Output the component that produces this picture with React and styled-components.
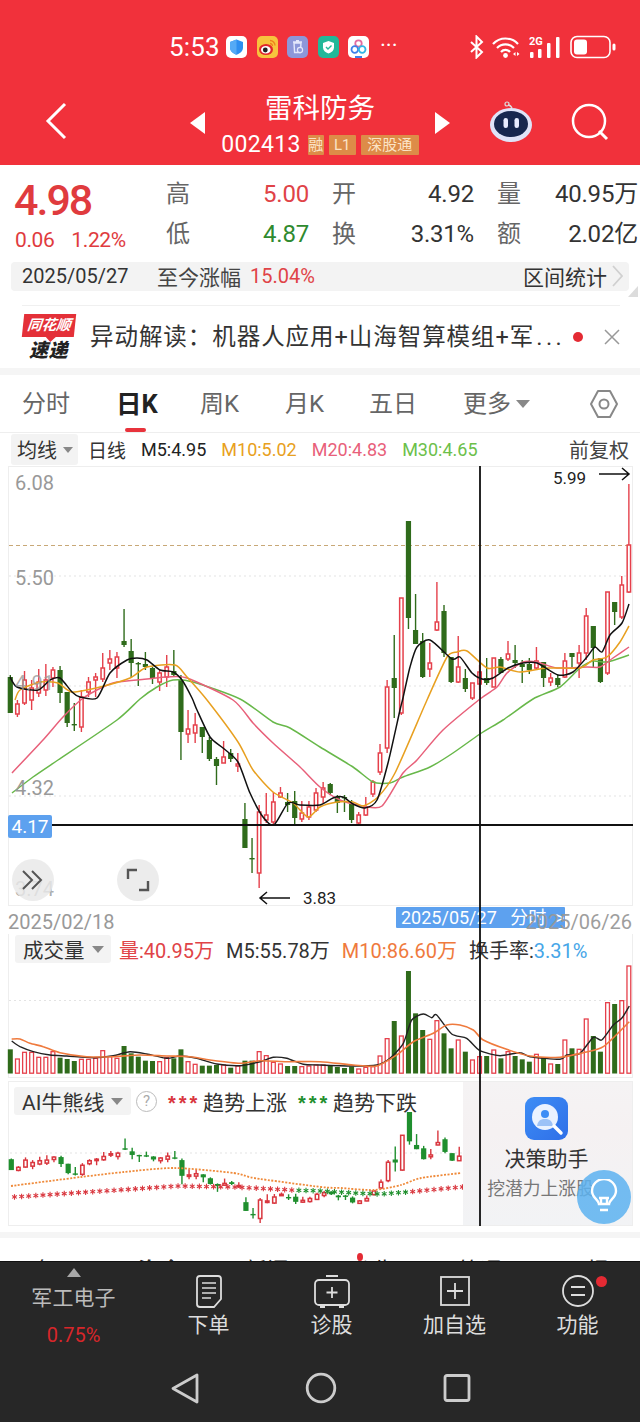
import React from "react";
import styled, { createGlobalStyle } from "styled-components";

const Global = createGlobalStyle`
  html, body { margin: 0; padding: 0; background: #fff; }
  body { width: 640px; height: 1422px; overflow: hidden; font-family: Roboto, "Noto Sans CJK SC", sans-serif; }
  * { box-sizing: border-box; }
`;

const RED = "#e5404b";
const GREEN = "#2f6b1b";
const CANDLES = [
  ["g",675,713,677,713],["r",700,717,704,714],["r",671,705,680,703],["r",680,710,688,700],["r",669,697,682,693],
  ["r",664,696,680,690],["r",667,687,670,678],["g",666,703,670,693],["g",692,727,692,723],["g",703,731,724,724],
  ["r",690,732,697,727],["r",677,697,682,692],["r",673,697,677,680],["r",653,682,668,679],["r",650,670,659,663],
  ["r",652,678,657,668],["g",609,647,641,645],["g",639,677,651,663],["g",662,686,663,663],["g",652,670,664,667],
  ["g",667,684,668,678],["r",670,691,673,682],["r",655,687,667,677],["g",650,677,671,675],["g",675,760,680,732],
  ["r",710,743,729,734],["r",713,743,725,733],["g",727,753,727,737],["g",737,761,740,759],["g",757,785,759,766],
  ["r",741,763,757,763],["g",749,762,753,759],["r",753,772,764,766],["g",803,848,819,848],["g",838,873,858,858],
  ["r",805,888,812,873],["r",793,823,815,820],["r",792,825,802,822],["r",787,798,793,797],["g",793,812,802,805],
  ["g",791,825,801,818],["r",801,822,813,819],["r",801,820,807,817],["r",788,812,793,810],["r",782,803,788,797],
  ["g",783,795,784,793],["g",795,813,797,803],["g",795,812,797,798],["g",800,823,804,820],["r",812,825,815,823],
  ["r",797,816,807,815],["r",780,797,782,794],["r",744,775,753,772],["r",680,753,687,748],["g",635,718,678,688],
  ["r",598,715,598,713],["g",521,629,521,618],["g",594,644,630,644],["g",633,678,641,677],["r",643,677,663,669],
  ["r",582,631,622,630],["g",605,657,611,653],["g",657,683,657,682],["r",636,683,667,682],["g",669,692,678,689],
  ["r",683,700,683,698],["r",665,690,672,684],["g",658,685,678,683],["r",658,687,658,687],["g",657,673,659,673],
  ["r",641,661,654,659],["g",645,668,660,663],["g",660,683,664,667],["g",658,674,664,670],["r",647,669,661,668],
  ["g",662,687,662,678],["r",673,686,678,682],["g",675,687,678,685],["r",653,678,661,677],["g",653,668,653,657],
  ["r",645,678,653,663],["r",608,660,616,653],["g",626,668,626,648],["g",658,683,658,682],["r",592,675,592,673],
  ["g",602,625,602,612],["r",576,619,585,617],["r",484,593,545,592],
];
const VOLZ = [358,387,367,367,382,382,365,383,387,393,388,388,385,362,380,385,348,370,380,392,393,395,383,385,358,395,403,407,407,405,405,413,408,392,392,365,377,397,402,408,408,410,408,405,405,408,411,414,410,417,412,410,378,326,273,318,123,250,300,328,272,310,355,330,365,390,380,378,360,385,365,378,388,395,373,382,402,402,330,355,358,267,318,365,218,222,212,108];
const X = (i) => 10.3 + 7.11 * i;

const M5 = [[10,677],[17,687],[38,690],[50,680],[60,678],[72,692],[80,697],[97,698],[110,673],[127,660],[137,658],[147,660],[160,670],[173,672],[182,680],[192,698],[197,710],[210,737],[223,748],[238,762],[250,793],[263,817],[274,825],[288,803],[300,805],[320,805],[333,798],[343,797],[353,804],[365,808],[377,800],[388,763],[400,710],[403,698],[410,667],[417,647],[430,640],[452,659],[460,657],[472,673],[482,679],[493,678],[508,668],[523,663],[537,663],[558,675],[573,672],[587,657],[595,647],[602,652],[610,635],[622,623],[629,604]];
const M10 = [[15,700],[20,690],[40,682],[58,683],[72,692],[100,687],[130,678],[147,667],[175,665],[187,677],[207,700],[238,742],[253,770],[273,792],[293,803],[308,817],[320,807],[337,802],[353,802],[363,806],[378,797],[395,773],[427,700],[447,657],[457,652],[467,651],[487,668],[500,667],[520,672],[547,668],[580,668],[593,660],[607,657],[620,642],[629,626]];
const M20 = [[12,773],[43,740],[63,717],[82,699],[103,687],[117,682],[147,679],[167,677],[187,678],[233,700],[253,723],[273,743],[300,767],[320,787],[340,800],[363,806],[382,806],[403,773],[417,760],[443,730],[480,699],[497,687],[507,673],[523,662],[537,662],[557,668],[587,667],[600,667],[613,658],[629,647]];
const M30 = [[12,793],[33,777],[58,760],[117,720],[140,699],[157,687],[173,680],[193,682],[240,699],[273,722],[290,728],[320,747],[353,767],[373,782],[390,783],[403,777],[430,767],[453,753],[480,734],[503,720],[533,699],[560,687],[580,668],[593,661],[607,662],[629,655]];
const zy = (x, y) => [x / 3, 930 + y / 3];
const VM5 = [[35,333],[60,350],[100,365],[150,375],[200,378],[280,383],[340,377],[390,365],[440,372],[500,385],[540,378],[590,385],[650,402],[720,407],[780,395],[820,382],[860,385],[910,403],[960,405],[1060,408],[1130,405],[1170,385],[1210,340],[1235,270],[1270,252],[1295,263],[1310,255],[1355,312],[1400,325],[1440,362],[1500,377],[1560,368],[1590,380],[1680,388],[1700,375],[1740,370],[1780,322],[1805,330],[1840,285],[1865,265],[1888,228]].map(([x,y]) => zy(x,y));
const VM10 = [[35,327],[60,327],[90,340],[130,350],[180,368],[260,380],[340,380],[420,375],[500,378],[570,380],[630,390],[720,400],[780,392],[860,395],[960,395],[1060,405],[1130,408],[1190,375],[1240,335],[1300,310],[1340,285],[1380,285],[1420,300],[1450,330],[1520,358],[1590,378],[1680,382],[1750,368],[1810,350],[1888,275]].map(([x,y]) => zy(x,y));
const AIDOT = [[10,1186],[80,1177],[123,1172],[173,1168],[233,1173],[253,1178],[320,1187],[340,1188],[373,1190],[400,1185],[420,1178],[460,1173]];
const STARLINE = [[13,1197],[177,1186],[233,1187],[290,1190],[320,1191],[353,1193],[380,1194],[407,1192],[460,1187]];

const smooth = (p) => {
  let d = `M${p[0][0]} ${p[0][1]}`;
  for (let i = 0; i < p.length - 1; i++) {
    const a = p[Math.max(i - 1, 0)], b = p[i], c = p[i + 1], e = p[Math.min(i + 2, p.length - 1)];
    const k = 0.12;
    d += ` C${(b[0] + (c[0] - a[0]) * k).toFixed(1)} ${(b[1] + (c[1] - a[1]) * k).toFixed(1)} ${(c[0] - (e[0] - b[0]) * k).toFixed(1)} ${(c[1] - (e[1] - b[1]) * k).toFixed(1)} ${c[0].toFixed(1)} ${c[1].toFixed(1)}`;
  }
  return d;
};
const interp = (pts, x) => {
  for (let i = 0; i < pts.length - 1; i++) {
    if (x <= pts[i + 1][0]) {
      const t = (x - pts[i][0]) / (pts[i + 1][0] - pts[i][0]);
      return pts[i][1] + (pts[i + 1][1] - pts[i][1]) * t;
    }
  }
  return pts[pts.length - 1][1];
};

/* ---------- header ---------- */
const Header = styled.header`
  height: 165px; background: #f1313b; color: #fff; padding-top: 35px;
`;
const StatusBar = styled.div`
  display: flex; align-items: center; height: 24px; padding-left: 169px; position: relative;
`;
const Clock = styled.span`
  font-size: 26px; line-height: 24px; width: 57px; letter-spacing: .2px;
`;
const NotifIcon = styled.svg`
  width: 21px; height: 22px; margin-right: 9.5px; flex: none;
`;
const Dots = styled.span`
  font-size: 16px; font-weight: 700; letter-spacing: 1px; line-height: 14px; margin-left: 2px; margin-bottom: 5px;
`;
const StatusRight = styled.div`
  margin-left: auto; padding-right: 24px; display: flex; align-items: center; gap: 8px;
`;
const StatusGlyph = styled.svg`
  display: block; flex: none;
`;
const NavBar = styled.nav`
  display: flex; align-items: flex-start; margin-top: 29px;
`;
const NavLeft = styled.div`
  width: 190px; padding: 14px 0 0 45px; flex: none;
`;
const NavCenter = styled.div`
  width: 260px; flex: none; display: flex; justify-content: space-between; align-items: center; padding-top: 3px;
`;
const NavRight = styled.div`
  flex: 1; padding: 13px 0 0 39px; display: flex; align-items: center; gap: 38px;
`;
const Tri = styled.i`
  display: block; width: 0; height: 0; border-top: 11px solid transparent; border-bottom: 11px solid transparent;
  ${(p) => (p.$dir === "left" ? "border-right: 15px solid #fff;" : "border-left: 15px solid #fff;")}
`;
const TitleStack = styled.div`
  display: flex; flex-direction: column; align-items: center;
`;
const Title = styled.div`
  font-size: 27.5px; line-height: 36px;
`;
const CodeRow = styled.div`
  display: flex; align-items: center; margin-top: 7px; height: 21px;
`;
const Code = styled.span`
  font-size: 23px; line-height: 21px; letter-spacing: .3px; margin-right: 7px;
`;
const Tag = styled.span`
  background: #dd8c48; color: #fbe3c6; font-size: 15px; line-height: 20px; height: 20px; text-align: center;
  width: ${(p) => p.$w}px; margin-right: ${(p) => p.$gap || 0}px; overflow: hidden; border-radius: 1px; display: block; white-space: nowrap;
`;

/* ---------- quote ---------- */
const Quote = styled.section`
  display: flex; height: 97px; padding: 12px 2px 0 14px;
`;
const PriceCol = styled.div`
  width: 152px; flex: none; color: #e03b3e;
`;
const Price = styled.div`
  font-size: 43px; font-weight: 500; line-height: 46px; letter-spacing: -2px; height: 46px;
`;
const Change = styled.div`
  display: flex; gap: 17px; font-size: 21px; line-height: 26px; margin-top: 4px; letter-spacing: -.4px; padding-left: 1px;
`;
const QuoteGrid = styled.div`
  display: grid; grid-template-columns: 143px 142px 141px; column-gap: 23px; grid-auto-rows: 40px; padding-top: 0;
`;
const Cell = styled.div`
  display: flex; justify-content: space-between; align-items: center; height: 34px;
`;
const CellLabel = styled.span`
  font-size: 24px; color: #666; line-height: 34px;
`;
const CellValue = styled.span`
  font-size: 24px; line-height: 34px; color: ${(p) => p.$c || "#333"}; letter-spacing: -.2px; white-space: nowrap;
`;
const RangeBar = styled.div`
  margin: 0 11px; height: 29px; background: #f3f3f3; border-radius: 4px; display: flex; align-items: center; padding: 0 5px 2px 11px; position: relative;
`;
const RangeDate = styled.span`
  font-size: 20px; color: #333; width: 135px; flex: none;
`;
const RangeLabel = styled.span`
  font-size: 21px; color: #444; margin-right: 9px;
`;
const RangePct = styled.span`
  font-size: 20px; color: #e04347;
`;
const RangeRight = styled.span`
  margin-left: auto; font-size: 21px; color: #333; display: flex; align-items: center; gap: 4px;
`;
const Corner = styled.i`
  position: absolute; right: -9px; bottom: -6px; width: 0; height: 0; border-left: 10px solid transparent; border-bottom: 11px solid #dcdcdc;
`;
const News = styled.section`
  margin: 14px 20px 0 22px; height: 63px; border-top: 1px solid #f0f0f0; display: flex; align-items: center;
`;
const NewsLogo = styled.div`
  width: 53px; flex: none; display: flex; flex-direction: column; align-items: center; margin-right: 15px; margin-top: 1px;
`;
const LogoBanner = styled.div`
  width: 52px; height: 23px; background: #e43038; color: #fff; font-style: italic; font-weight: 700; font-size: 14.5px; line-height: 23px; text-align: center;
  transform: skewX(-6deg); position: relative;
  &::after { content: ""; position: absolute; left: 24px; top: 23px; border-left: 5px solid transparent; border-right: 5px solid transparent; border-top: 5px solid #e43038; }
`;
const LogoSub = styled.div`
  font-size: 19px; font-weight: 900; font-style: italic; line-height: 22px; color: #222; margin-top: 3px; letter-spacing: .5px;
`;
const NewsText = styled.div`
  flex: 1; font-size: 23.5px; color: #333; letter-spacing: .95px; white-space: nowrap; overflow: hidden; line-height: 30px;
`;
const Ellipsis = styled.span`
  letter-spacing: 3.5px; margin-left: 2px;
`;
const RedDot = styled.i`
  width: 10px; height: 10px; border-radius: 50%; background: #e42a33; margin: 0 21px 0 8px; flex: none;
`;
const Band = styled.div`
  height: ${(p) => p.$h}px; background: #f5f5f5; margin-top: ${(p) => p.$top || 0}px;
`;

/* ---------- tabs ---------- */
const Tabs = styled.div`
  height: 58px; border-bottom: 1px solid #eee; display: grid; grid-template-columns: 94px 84px 85px 84px 94px 127px 1fr; padding-left: 22px; padding-right: 22px; align-items: center;
`;
const TabItem = styled.div`
  font-size: ${(p) => (p.$on ? 25.5 : 24)}px; line-height: 58px; color: ${(p) => (p.$on ? "#222" : "#666")}; font-weight: ${(p) => (p.$on ? 700 : 400)}; position: relative; display: flex; align-items: center; gap: 5px; white-space: nowrap;
  ${(p) => p.$on && `&::after { content: ""; position: absolute; left: 9px; bottom: 1px; width: 21px; height: 4px; border-radius: 2px; background: #e8333c; }`}
`;
const Caret = styled.i`
  display: inline-block; width: 0; height: 0; flex: none;
  border-left: ${(p) => p.$s || 6}px solid transparent; border-right: ${(p) => p.$s || 6}px solid transparent; border-top: ${(p) => (p.$s || 6) + 1}px solid #888;
`;
const LegendRow = styled.div`
  height: 33px; display: flex; align-items: center; padding: 0 11px; gap: 15px; margin-bottom: 0;
`;
const PillTop = styled.div`
  display: flex; align-items: center; gap: 6px; background: #f3f3f3; height: 31px; width: 67px; padding-left: 6px; border-radius: 3px; font-size: 20px; color: #333; margin-right: -5px; flex: none;
`;
const Plain = styled.span`
  font-size: ${(p) => p.$s || 19}px; color: ${(p) => p.$c || "#333"}; white-space: nowrap; ${(p) => p.$right && "margin-left: auto; font-size: 20px;"}
`;

/* ---------- charts ---------- */
const ChartStack = styled.div`
  position: relative;
`;
const MainFrame = styled.div`
  margin: 0 7px 0 8px; height: 440px; border: 1px solid #eee; position: relative;
`;
const ChartSvg = styled.svg`
  display: block; overflow: visible; position: absolute; left: ${(p) => p.$l ?? -1}px; top: ${(p) => p.$t ?? -1}px;
  text { font-family: Roboto, "Noto Sans CJK SC", sans-serif; }
`;
const PriceBadge = styled.div`
  position: absolute; left: -1px; top: 348px; width: 44px; height: 23px; background: #5da1ef; color: #fff; font-size: 19px; line-height: 23px; text-align: center; border-radius: 2px;
`;
const RoundBtn = styled.div`
  position: absolute; left: ${(p) => p.$x}px; top: 392px; width: 42px; height: 42px; border-radius: 50%; background: rgba(232,232,232,.82); display: flex; align-items: center; justify-content: center;
`;
const DateRow = styled.div`
  height: 28px; padding: 0 8px; display: flex; justify-content: space-between; align-items: center; position: relative; color: #999; font-size: 20px;
`;
const DateTip = styled.div`
  position: absolute; left: 396px; top: 1px; width: 169px; height: 21px; background: #5da1ef; color: #fff; font-size: 18px; line-height: 21px; padding-left: 5px; white-space: pre; border-radius: 1px;
`;
const DateEnd = styled.span`
  position: relative; z-index: 3; opacity: .95; margin-top: 3px;
`;
const DateStart = styled.span`
  margin-top: 3px;
`;
const VolFrame = styled.div`
  margin: 0 7px 0 8px; height: 144px; border-left: 1px solid #eee; border-right: 1px solid #eee; border-bottom: 1px solid #eee; position: relative;
`;
const VolHeader = styled.div`
  display: flex; align-items: center; height: 30px; padding-left: 6px; font-size: 20px; white-space: nowrap; position: relative;
`;
const Pill = styled.div`
  display: flex; align-items: center; gap: 7px; background: #f3f3f3; height: 28px; border-radius: 3px; padding: 0 8px; color: #333; font-size: ${(p) => p.$s || 20.5}px; flex: none; width: ${(p) => p.$w}px;
`;
const VolItem = styled.span`
  color: ${(p) => p.$c || "#333"}; margin-left: ${(p) => p.$m}px;
`;
const AIFrame = styled.div`
  margin: 3px 7px 0 8px; height: 145px; border: 1px solid #eee; display: flex; position: relative;
`;
const AIChart = styled.div`
  width: 454px; flex: none; position: relative;
`;
const AIHeader = styled.div`
  display: flex; align-items: center; height: 28px; margin: 5px 0 0 5px; white-space: nowrap; position: relative; z-index: 1;
`;
const Help = styled.span`
  width: 21px; height: 21px; border: 1.5px solid #bbb; border-radius: 50%; color: #aaa; font-size: 15px; line-height: 18px; text-align: center; margin-left: 5px; flex: none;
`;
const Stars = styled.span`
  color: ${(p) => p.$c}; font-size: 20px; font-weight: 700; letter-spacing: 3px; margin-left: ${(p) => p.$m}px; line-height: 24px; height: 20px; width: 31px; flex: none; font-family: "Liberation Sans", sans-serif;
`;
const TrendText = styled.span`
  font-size: 21px; color: #333; margin-left: 4px;
`;
const AISide = styled.div`
  flex: 1; background: linear-gradient(180deg, #f5f3f4, #f5f1f2 35%, #f2f3f5); display: flex; flex-direction: column; align-items: center; padding: 15px 0 0 0; overflow: hidden; position: relative;
`;
const SideIcon = styled.svg`
  display: block; margin-right: 2px; flex: none;
`;
const SideTitle = styled.div`
  font-size: 21px; color: #333; line-height: 28px; margin-top: 5px; margin-right: 2px;
`;
const SideSub = styled.div`
  font-size: 17.8px; color: #777; line-height: 24px; margin-top: 4px; margin-right: 14px; white-space: nowrap;
`;
const Bulb = styled.div`
  position: absolute; right: 1px; bottom: 1px; width: 54px; height: 54px; border-radius: 50%; background: rgba(92,178,240,.85); display: flex; align-items: center; justify-content: center;
`;
const Crosshair = styled.div`
  position: absolute; left: 479px; top: 0; width: 2px; height: 760px; background: rgba(20,20,20,.92); z-index: 2; pointer-events: none;
`;
const Peek = styled.div`
  height: 23px; overflow: hidden; padding-top: 20px; display: grid; grid-template-columns: repeat(6, 1fr); position: relative;
`;
const PeekTab = styled.span`
  font-size: 22px; line-height: 26px; text-align: center; color: #333; font-weight: ${(p) => (p.$on ? 700 : 400)};
`;
const PeekDot = styled.i`
  position: absolute; left: 357px; top: 15px; width: 6px; height: 8px; border-radius: 50%; background: #e42a33;
`;

/* ---------- bottom ---------- */
const Bottom = styled.footer`
  height: 161px; background: #272727; border-top: 1px solid #111;
`;
const ActionRow = styled.div`
  display: grid; grid-template-columns: 147px repeat(4, 123px); height: 99px;
`;
const Sector = styled.div`
  display: flex; flex-direction: column; align-items: center; padding-top: 6px;
`;
const UpTri = styled.i`
  width: 0; height: 0; border-left: 7.5px solid transparent; border-right: 7.5px solid transparent; border-bottom: 9px solid #a8a8a8;
`;
const SectorName = styled.div`
  font-size: 21px; color: #bbb; line-height: 28px; margin-top: 7px; letter-spacing: .1px;
`;
const SectorPct = styled.div`
  font-size: 20px; color: #d7262a; line-height: 26px; margin-top: 10px;
`;
const Action = styled.div`
  display: flex; flex-direction: column; align-items: center; padding-top: 13px; position: relative;
`;
const ActionIcon = styled.svg`
  display: block; width: 38px; height: 33px; overflow: visible;
`;
const ActionLabel = styled.div`
  font-size: 21px; color: #ddd; line-height: 28px; margin-top: 3px;
`;
const ActionDot = styled.i`
  position: absolute; left: 80px; top: 14px; width: 11px; height: 11px; border-radius: 50%; background: #e42a33;
`;
const SysNav = styled.div`
  display: flex; justify-content: center; gap: 106px; padding-top: 12px; padding-left: 1px;
`;
const SysIcon = styled.svg`
  width: 30px; height: 30px; display: block; overflow: visible;
`;

/* ---------- chart drawing ---------- */
const Candle = ({ d, i, map = (v) => v, red = RED, green = GREEN, w = 4.8 }) => {
  const [k, wt, wb, bt, bb] = d;
  const x = X(i);
  const top = map(bt), bot = Math.max(map(bb), map(bt) + 1.4);
  if (k === "g") {
    return (
      <g>
        <line x1={x} x2={x} y1={map(wt)} y2={map(wb)} stroke={green} strokeWidth="1.4" />
        <rect x={x - w / 2 - 0.2} width={w + 0.4} y={top} height={bot - top} fill={green} />
      </g>
    );
  }
  return (
    <g>
      <line x1={x} x2={x} y1={map(wt)} y2={map(wb)} stroke={red} strokeWidth="1.4" />
      <rect x={x - w / 2 + 0.7} width={w - 1.4} y={top} height={bot - top} fill="#fff" stroke={red} strokeWidth="1.5" />
    </g>
  );
};
const MA = ({ pts, c, w = 1.5 }) => <path d={smooth(pts)} fill="none" stroke={c} strokeWidth={w} strokeLinejoin="round" />;

const MainChart = () => (
  <ChartSvg width="626" height="440" viewBox="8 466 626 440">
    {[576, 686, 796].map((y) => (
      <line key={y} x1="9" x2="632" y1={y} y2={y} stroke="#e3e3e3" strokeDasharray="2 3" />
    ))}
    <line x1="9" x2="632" y1="545.5" y2="545.5" stroke="#c8a877" strokeDasharray="4 3" />
    {CANDLES.map((d, i) => <Candle key={i} d={d} i={i} />)}
    <MA pts={M30} c="#68b84a" />
    <MA pts={M20} c="#e8607a" />
    <MA pts={M10} c="#e8a020" />
    <MA pts={M5} c="#111" />
    <line x1="52" x2="633" y1="825" y2="825" stroke="#111" strokeWidth="2" />
    <g fontSize="20" fill="#999">
      <text x="15" y="490">6.08</text>
      <text x="15" y="585">5.50</text>
      <text x="15" y="690" fillOpacity=".8">4.91</text>
      <text x="15" y="795">4.32</text>
      <text x="15" y="896" fillOpacity=".8">3.74</text>
    </g>
    <text x="553" y="484" fontSize="17" fill="#222">5.99</text>
    <path d="M599 474H629M622 468l7 6-7 6" fill="none" stroke="#111" strokeWidth="1.5" />
    <text x="303" y="904" fontSize="17" fill="#222">3.83</text>
    <path d="M290 898H260M267 892l-7 6 7 6" fill="none" stroke="#111" strokeWidth="1.5" />
  </ChartSvg>
);

const VolChart = () => (
  <ChartSvg width="626" height="112" viewBox="8 966 626 112" $t={32}>
    <line x1="9" x2="632" y1="1000.5" y2="1000.5" stroke="#e3e3e3" strokeDasharray="2 3" />
    {VOLZ.map((z, i) => {
      const y = 930 + z / 3;
      const x = X(i);
      return CANDLES[i][0] === "g" ? (
        <rect key={i} x={x - 2.5} width="5" y={y} height={1073.5 - y} fill={GREEN} />
      ) : (
        <rect key={i} x={x - 1.9} width="3.8" y={y} height={1073.2 - y} fill="#fff" stroke={RED} strokeWidth="1.3" />
      );
    })}
    <MA pts={VM5} c="#222" w={1.4} />
    <MA pts={VM10} c="#ef7a3d" w={1.6} />
  </ChartSvg>
);

const aiMap = (v) => 954.4 + 0.3025 * v;
const Star = ({ x, y, c }) => (
  <g stroke={c} strokeWidth="1.1">
    <line x1={x} x2={x} y1={y - 2.8} y2={y + 2.8} />
    <line x1={x - 2.4} x2={x + 2.4} y1={y - 1.4} y2={y + 1.4} />
    <line x1={x - 2.4} x2={x + 2.4} y1={y + 1.4} y2={y - 1.4} />
  </g>
);
const AILines = () => {
  const stars = [];
  for (let x = 13.5; x < 462; x += 7.11) {
    stars.push(<Star key={x} x={x} y={interp(STARLINE, x)} c={x > 295 && x < 410 ? "#1f8f2e" : "#d9363e"} />);
  }
  return (
    <ChartSvg width="454" height="145" viewBox="8 1081 454 145" $l={0} $t={-1}>
      <line x1="9" x2="462" y1="1153" y2="1153" stroke="#e3e3e3" strokeDasharray="2 3" />
      {CANDLES.slice(0, 64).map((d, i) => <Candle key={i} d={d} i={i} map={aiMap} red="#d9363e" green="#1f8f2e" />)}
      <path d={smooth(AIDOT)} fill="none" stroke="#ef8a3a" strokeWidth="1.8" strokeDasharray="2 1.5" />
      {stars}
    </ChartSvg>
  );
};

export default function App() {
  return (
    <>
      <Global />
      <Header>
        <StatusBar>
          <Clock>5:53</Clock>
          <NotifIcon viewBox="0 0 21 22">
            <rect width="21" height="22" rx="5" fill="#fff" />
            <path d="M10.5 3.5 17 6v5.5c0 3.6-2.8 6-6.5 7.3C6.8 17.500 4 15.100 4 11.500V6z" fill="#2e8ff0" />
            <path d="M10.500 3.500V18.800C6.800 17.500 4 15.100 4 11.500V6z" fill="#55aaf5" />
          </NotifIcon>
          <NotifIcon viewBox="0 0 21 22">
            <rect width="21" height="22" rx="5" fill="#f7c33d" />
            <ellipse cx="9" cy="13.500" rx="7" ry="5.500" fill="#e2262d" />
            <ellipse cx="8.800" cy="13.800" rx="4.800" ry="3.800" fill="#fff" />
            <circle cx="8.300" cy="14" r="2.400" fill="#222" />
            <path d="M13 4.500a5 5 0 0 1 5 5M13 7.500a2.500 2.500 0 0 1 2.500 2.500" stroke="#ef7e1d" strokeWidth="1.300" fill="none" />
          </NotifIcon>
          <NotifIcon viewBox="0 0 21 22">
            <rect width="21" height="22" rx="5" fill="#8d97d9" />
            <path d="M7 7h7l-.6 9.500h-5.800zM6 6h9M9 4.700h3" stroke="#e4e7fb" strokeWidth="1.400" fill="none" />
            <circle cx="13" cy="14" r="2.600" fill="#8d97d9" stroke="#e4e7fb" strokeWidth="1.200" />
          </NotifIcon>
          <NotifIcon viewBox="0 0 21 22">
            <rect width="21" height="22" rx="5" fill="#22b899" />
            <path d="M10.500 5 16 7v4.500c0 3-2.300 4.900-5.500 6-3.200-1.100-5.500-3-5.500-6V7z" fill="#fff" />
            <path d="m8 11 2 2 3.500-3.500" stroke="#22b899" strokeWidth="1.400" fill="none" />
          </NotifIcon>
          <NotifIcon viewBox="0 0 21 22">
            <rect width="21" height="22" rx="5" fill="#fff" />
            <circle cx="10.500" cy="7.500" r="3.200" fill="none" stroke="#e46ba0" strokeWidth="1.800" />
            <circle cx="6.800" cy="13.500" r="3.300" fill="none" stroke="#3f7fe8" strokeWidth="1.800" />
            <circle cx="14.200" cy="13.500" r="3.300" fill="none" stroke="#33b5e5" strokeWidth="1.800" />
            <rect x="7" y="20" width="7" height="2" fill="#3f7fe8" />
          </NotifIcon>
          <Dots>···</Dots>
          <StatusRight>
            <StatusGlyph width="15" height="24" viewBox="0 0 15 24">
              <path d="M2 7l11 10-5.500 5.500V1.500L13 7 2 17" fill="none" stroke="#fff" strokeWidth="2" />
            </StatusGlyph>
            <StatusGlyph width="29" height="22" viewBox="0 0 29 22">
              <path d="M1 8a17 17 0 0 1 25 0M5 12a12 12 0 0 1 17 0M9 16a6 6 0 0 1 9 0" fill="none" stroke="#fff" strokeWidth="2.200" />
              <circle cx="13.500" cy="19.500" r="2.400" fill="#fff" />
              <path d="M21 18l2.500-2v4zM25 16l2.500 2-2.500 2z" fill="#fff" />
            </StatusGlyph>
            <StatusGlyph width="33" height="24" viewBox="0 0 33 24">
              <text x="0" y="10" fontSize="11" fontWeight="700" fill="#fff" fontFamily="Roboto, sans-serif">2G</text>
              <rect x="1" y="17" width="3.500" height="6" rx="1" fill="#fff" />
              <rect x="9" y="14" width="3.500" height="9" rx="1" fill="#fff" />
              <rect x="18" y="8" width="3.500" height="15" rx="1" fill="#fff" />
              <rect x="27" y="2" width="3.500" height="21" rx="1" fill="#fff" />
            </StatusGlyph>
            <StatusGlyph width="46" height="24" viewBox="0 0 46 24">
              <rect x="1" y="1.500" width="39" height="21" rx="6" fill="none" stroke="#fff" strokeWidth="1.600" />
              <rect x="4" y="4.500" width="13" height="15" rx="3" fill="#fff" />
              <rect x="42.500" y="8.500" width="3" height="7" rx="1.500" fill="#fff" />
            </StatusGlyph>
          </StatusRight>
        </StatusBar>
        <NavBar>
          <NavLeft>
            <StatusGlyph width="22" height="38" viewBox="0 0 22 38">
              <path d="M20 2 3 19l17 17" fill="none" stroke="#fff" strokeWidth="3" />
            </StatusGlyph>
          </NavLeft>
          <NavCenter>
            <Tri $dir="left" />
            <TitleStack>
              <Title>雷科防务</Title>
              <CodeRow>
                <Code>002413</Code>
                <Tag $w={16} $gap={5}>融</Tag>
                <Tag $w={27} $gap={5}>L1</Tag>
                <Tag $w={58}>深股通</Tag>
              </CodeRow>
            </TitleStack>
            <Tri $dir="right" />
          </NavCenter>
          <NavRight>
            <StatusGlyph width="44" height="42" viewBox="0 0 44 42">
              <circle cx="18" cy="3" r="2" fill="none" stroke="#ddd" strokeWidth="1.200" />
              <path d="M19 4c2 0 3 1 4 3" fill="none" stroke="#ddd" strokeWidth="1.500" />
              <ellipse cx="22" cy="24" rx="21" ry="17" fill="#dfe3f8" />
              <ellipse cx="22" cy="23" rx="17" ry="13" fill="#17274f" />
              <rect x="14.500" y="17" width="4.500" height="10" rx="2.200" fill="#e8ecff" />
              <rect x="25.500" y="17" width="4.500" height="10" rx="2.200" fill="#e8ecff" />
            </StatusGlyph>
            <StatusGlyph width="38" height="38" viewBox="0 0 38 38">
              <circle cx="18" cy="18" r="16" fill="none" stroke="#fff" strokeWidth="2.500" />
              <path d="m28 28 8 8" stroke="#fff" strokeWidth="3" />
            </StatusGlyph>
          </NavRight>
        </NavBar>
      </Header>

      <Quote>
        <PriceCol>
          <Price>4.98</Price>
          <Change>
            <span>0.06</span>
            <span>1.22%</span>
          </Change>
        </PriceCol>
        <QuoteGrid>
          <Cell><CellLabel>高</CellLabel><CellValue $c="#e04347">5.00</CellValue></Cell>
          <Cell><CellLabel>开</CellLabel><CellValue>4.92</CellValue></Cell>
          <Cell><CellLabel>量</CellLabel><CellValue>40.95万</CellValue></Cell>
          <Cell><CellLabel>低</CellLabel><CellValue $c="#2f8a2f">4.87</CellValue></Cell>
          <Cell><CellLabel>换</CellLabel><CellValue>3.31%</CellValue></Cell>
          <Cell><CellLabel>额</CellLabel><CellValue>2.02亿</CellValue></Cell>
        </QuoteGrid>
      </Quote>
      <RangeBar>
        <RangeDate>2025/05/27</RangeDate>
        <RangeLabel>至今涨幅</RangeLabel>
        <RangePct>15.04%</RangePct>
        <RangeRight>
          区间统计
          <svg width="13" height="22" viewBox="0 0 13 22"><path d="m2 1 9 10-9 10" fill="none" stroke="#d0d0d0" strokeWidth="1.800" /></svg>
        </RangeRight>
        <Corner />
      </RangeBar>
      <News>
        <NewsLogo>
          <LogoBanner>同花顺</LogoBanner>
          <LogoSub>速递</LogoSub>
        </NewsLogo>
        <NewsText>异动解读：机器人应用+山海智算模组+军<Ellipsis>...</Ellipsis></NewsText>
        <RedDot />
        <svg width="16" height="16" viewBox="0 0 16 16" style={{ flex: "none" }}><path d="m1 1 14 14M15 1 1 15" stroke="#999" strokeWidth="1.500" /></svg>
      </News>
      <Band $h={7} />
      <Tabs>
        <TabItem>分时</TabItem>
        <TabItem $on>日K</TabItem>
        <TabItem>周K</TabItem>
        <TabItem>月K</TabItem>
        <TabItem>五日</TabItem>
        <TabItem>更多<Caret $s={7} /></TabItem>
        <svg width="28" height="32" viewBox="0 0 28 32" style={{ justifySelf: "end", display: "block" }}>
          <path d="M8 3h12l7 13-7 13H8L1 16z" fill="none" stroke="#888" strokeWidth="2" strokeLinejoin="round" />
          <circle cx="14" cy="16" r="4.500" fill="none" stroke="#888" strokeWidth="2" />
        </svg>
      </Tabs>
      <LegendRow>
        <PillTop>均线<Caret $s={5} /></PillTop>
        <Plain>日线</Plain>
        <Plain $s={18} $c="#222">M5:4.95</Plain>
        <Plain $s={18} $c="#e8a020">M10:5.02</Plain>
        <Plain $s={18} $c="#e8607a">M20:4.83</Plain>
        <Plain $s={18} $c="#6cc04a">M30:4.65</Plain>
        <Plain $right $c="#444">前复权</Plain>
      </LegendRow>

      <ChartStack>
        <Crosshair />
        <MainFrame>
          <MainChart />
          <PriceBadge>4.17</PriceBadge>
          <RoundBtn $x={3}>
            <svg width="24" height="22" viewBox="0 0 24 22"><path d="m2 2 9 9-9 9M11 2l9 9-9 9" fill="none" stroke="#555" strokeWidth="2" /></svg>
          </RoundBtn>
          <RoundBtn $x={108}>
            <svg width="24" height="24" viewBox="0 0 24 24"><path d="M2 11V2h9M22 13v9h-9" fill="none" stroke="#555" strokeWidth="2.400" /></svg>
          </RoundBtn>
        </MainFrame>
        <DateRow>
          <DateStart>2025/02/18</DateStart>
          <DateTip>{"2025/05/27   分时  >"}</DateTip>
          <DateEnd>2025/06/26</DateEnd>
        </DateRow>
        <VolFrame>
          <VolChart />
          <VolHeader>
            <Pill $w={96}>成交量<Caret $s={6} /></Pill>
            <VolItem $c="#e04347" $m={8}>量:40.95万</VolItem>
            <VolItem $m={12}>M5:55.78万</VolItem>
            <VolItem $c="#ef7a3d" $m={12}>M10:86.60万</VolItem>
            <VolItem $m={12}>换手率:<VolItem $c="#46a6e8" $m={0}>3.31%</VolItem></VolItem>
          </VolHeader>
        </VolFrame>
        <AIFrame>
          <AIChart>
            <AILines />
            <AIHeader>
              <Pill $w={117} $s={21}>AI牛熊线<Caret $s={6} /></Pill>
              <Help>?</Help>
              <Stars $c="#d9363e" $m={11}>***</Stars>
              <TrendText>趋势上涨</TrendText>
              <Stars $c="#1f8f2e" $m={11}>***</Stars>
              <TrendText>趋势下跌</TrendText>
            </AIHeader>
          </AIChart>
          <AISide>
            <SideIcon width="43" height="43" viewBox="0 0 43 43">
              <defs>
                <linearGradient id="aig" x1="0" y1="0" x2="1" y2="1">
                  <stop offset="0" stopColor="#3d8df5" />
                  <stop offset="1" stopColor="#2f6fe8" />
                </linearGradient>
              </defs>
              <rect width="43" height="43" rx="9" fill="url(#aig)" />
              <circle cx="20" cy="20" r="13" fill="#eaf2ff" />
              <circle cx="20" cy="17" r="4" fill="#3d8df5" />
              <path d="M12 29c1-6 4-7 8-7s7 1 8 7z" fill="#9cc2f7" />
              <path d="m29 29 7 7" stroke="#fff" strokeWidth="3.500" strokeLinecap="round" />
            </SideIcon>
            <SideTitle>决策助手</SideTitle>
            <SideSub>挖潜力上涨股</SideSub>
            <Bulb>
              <svg width="28" height="36" viewBox="0 0 28 36">
                <path d="M9 25c0-4-7-6-7-13a12 12 0 0 1 24 0c0 7-7 9-7 13z" fill="none" stroke="#fff" strokeWidth="2.400" />
                <path d="M10 31h8M11 20v5M17 20v5M9 19h10" stroke="#fff" strokeWidth="2.400" fill="none" />
              </svg>
            </Bulb>
          </AISide>
        </AIFrame>
      </ChartStack>
      <Band $h={6} $top={6} />
      <Peek>
        <PeekTab>盘口</PeekTab>
        <PeekTab $on>资金</PeekTab>
        <PeekTab>新闻</PeekTab>
        <PeekTab>公告</PeekTab>
        <PeekTab>简况</PeekTab>
        <PeekTab>研报</PeekTab>
        <PeekDot />
      </Peek>

      <Bottom>
        <ActionRow>
          <Sector>
            <UpTri />
            <SectorName>军工电子</SectorName>
            <SectorPct>0.75%</SectorPct>
          </Sector>
          <Action>
            <ActionIcon viewBox="0 0 38 33">
              <path d="M7 4a3 3 0 0 1 3-3h18a3 3 0 0 1 3 3v20l-7 8H10a3 3 0 0 1-3-3z" fill="none" stroke="#ddd" strokeWidth="1.800" />
              <path d="M12 8h14M12 13h14M12 18h14M12 23h9" stroke="#ddd" strokeWidth="1.600" />
            </ActionIcon>
            <ActionLabel>下单</ActionLabel>
          </Action>
          <Action>
            <ActionIcon viewBox="0 0 38 33">
              <rect x="2" y="5" width="34" height="25" rx="4" fill="none" stroke="#ddd" strokeWidth="1.800" />
              <path d="M13 1h12M19 12v11M13.500 17.500h11M7 32h5M26 32h5" stroke="#ddd" strokeWidth="1.800" />
            </ActionIcon>
            <ActionLabel>诊股</ActionLabel>
          </Action>
          <Action>
            <ActionIcon viewBox="0 0 38 33">
              <rect x="5" y="2" width="28" height="28" fill="none" stroke="#ddd" strokeWidth="1.800" />
              <path d="M19 8v16M11 16h16" stroke="#ddd" strokeWidth="1.800" />
            </ActionIcon>
            <ActionLabel>加自选</ActionLabel>
          </Action>
          <Action>
            <ActionIcon viewBox="0 0 38 33">
              <circle cx="19" cy="16" r="15" fill="none" stroke="#ddd" strokeWidth="1.800" />
              <path d="M12 12h14M12 20h14" stroke="#ddd" strokeWidth="1.800" />
            </ActionIcon>
            <ActionLabel>功能</ActionLabel>
            <ActionDot />
          </Action>
        </ActionRow>
        <SysNav>
          <SysIcon viewBox="0 0 30 30">
            <path d="M27 2v27L3 15.500z" fill="none" stroke="#ccc" strokeWidth="2.800" strokeLinejoin="round" />
          </SysIcon>
          <SysIcon viewBox="0 0 30 30">
            <circle cx="15" cy="15" r="13.800" fill="none" stroke="#ccc" strokeWidth="2.800" />
          </SysIcon>
          <SysIcon viewBox="0 0 30 30">
            <rect x="3" y="2.500" width="24" height="25" rx="2" fill="none" stroke="#ccc" strokeWidth="2.800" />
          </SysIcon>
        </SysNav>
      </Bottom>
    </>
  );
}
